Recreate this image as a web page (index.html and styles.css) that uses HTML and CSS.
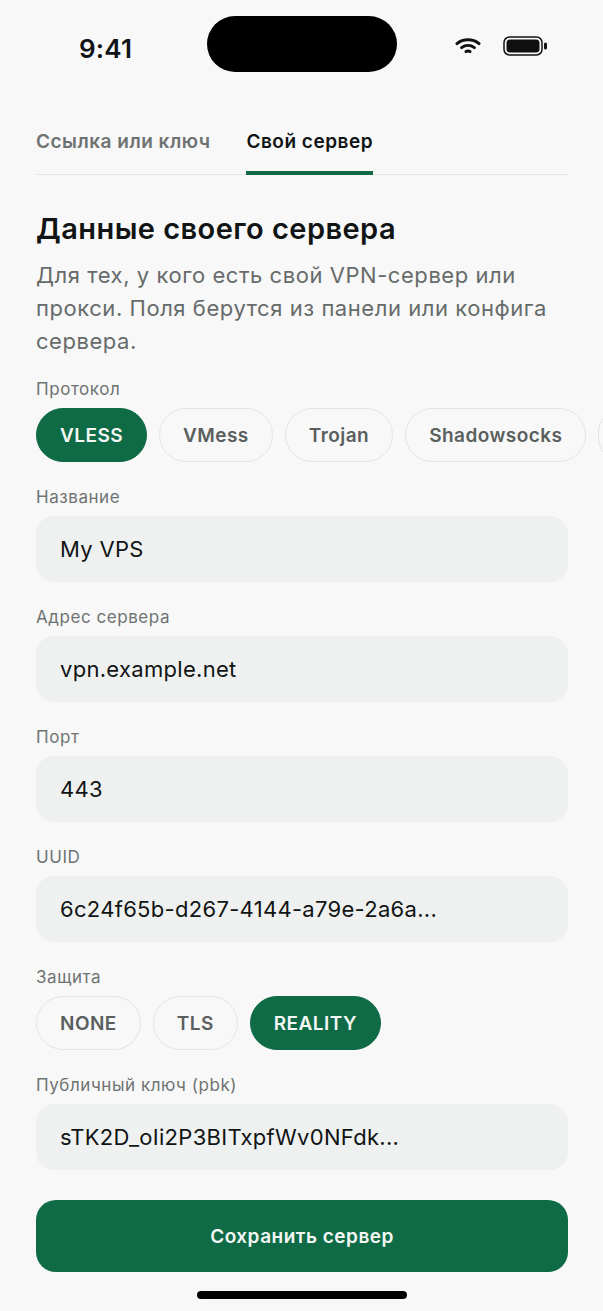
FILE: index.html
```html
<!DOCTYPE html>
<html lang="ru">

<head>
  <meta charset="UTF-8">
  <meta name="viewport" content="width=device-width, initial-scale=1.0">
  <title>Свой сервер</title>
  <link rel="stylesheet" href="styles.css">
</head>

<body>
  <!-- Status bar -->
  <div class="status-bar">
    <span class="time">9:41</span>
    <div class="island"></div>
    <div class="status-icons">
      <svg class="wifi" width="26" height="18" viewBox="0 0 26 18" fill="none" stroke="#111" stroke-width="3" stroke-linecap="round">
        <path d="M2 6.6C8.2 1.6 17.8 1.6 24 6.6"/>
        <path d="M6.6 10.6C10.4 7.8 15.6 7.8 19.4 10.6"/>
        <path d="M11 14.6C12.2 13.8 13.8 13.8 15 14.6"/>
      </svg>
      <svg class="battery" width="46" height="20" viewBox="0 0 46 20">
        <rect x="1" y="1" width="38" height="18" rx="5.5" fill="none" stroke="#111" stroke-width="1.5"/>
        <rect x="3.5" y="3.5" width="33" height="13" rx="3.5" fill="#111"/>
        <rect x="41" y="6.5" width="3" height="7" rx="1.5" fill="#111"/>
      </svg>
    </div>
  </div>

  <main class="content">
    <!-- Tabs -->
    <div class="tabs">
      <a class="tab">Ссылка или ключ</a>
      <a class="tab active">Свой сервер</a>
    </div>

    <h1>Данные своего сервера</h1>
    <p class="intro">Для тех, у кого есть свой VPN-сервер или прокси. Поля берутся из панели или конфига сервера.</p>

    <div class="label chips-label first">Протокол</div>
    <div class="chips">
      <span class="chip active">VLESS</span>
      <span class="chip">VMess</span>
      <span class="chip">Trojan</span>
      <span class="chip">Shadowsocks</span>
      <span class="chip chip-cut"></span>
    </div>

    <div class="field">
      <div class="label">Название</div>
      <div class="input">My VPS</div>
    </div>
    <div class="field">
      <div class="label">Адрес сервера</div>
      <div class="input">vpn.example.net</div>
    </div>
    <div class="field">
      <div class="label">Порт</div>
      <div class="input">443</div>
    </div>
    <div class="field">
      <div class="label">UUID</div>
      <div class="input">6c24f65b-d267-4144-a79e-2a6a...</div>
    </div>

    <div class="label chips-label">Защита</div>
    <div class="chips">
      <span class="chip">NONE</span>
      <span class="chip">TLS</span>
      <span class="chip active">REALITY</span>
    </div>

    <div class="field">
      <div class="label">Публичный ключ (pbk)</div>
      <div class="input">sTK2D_oIi2P3BITxpfWv0NFdk...</div>
    </div>

    <button class="save">Сохранить сервер</button>
  </main>

  <div class="home-bar"></div>
</body>

</html>
```

FILE: styles.css
```css
* {
  box-sizing: border-box;
}

html,
body {
  margin: 0;
  height: 100%;
}

body {
  width: 603px;
  height: 1311px;
  overflow: hidden;
  position: relative;
  background: #f8f8f8;
  color: #111414;
  font-family: Inter, "Noto Sans", sans-serif;
}

/* Status bar */
.status-bar {
  height: 106px;
  position: relative;
  display: flex;
  justify-content: space-between;
  align-items: flex-start;
  padding: 32px 54px 0 79px;
}

.time {
  font-size: 26px;
  font-weight: 600;
  line-height: 34px;
  letter-spacing: 0.2px;
}

.island {
  position: absolute;
  top: 16px;
  left: 207px;
  width: 190px;
  height: 56px;
  background: #000;
  border-radius: 28px;
}

.status-icons {
  display: flex;
  align-items: center;
  gap: 22px;
  padding-top: 4px;
}

.content {
  padding: 0 35px 0 36px;
}

/* Tabs */
.tabs {
  display: flex;
  gap: 36px;
  height: 69px;
  border-bottom: 1px solid #e3e5e5;
}

.tab {
  height: 69px;
  padding-top: 23px;
  font-size: 19px;
  font-weight: 600;
  line-height: 26px;
  letter-spacing: 0.5px;
  color: #6e7372;
}

.tab.active {
  color: #111414;
  border-bottom: 4px solid #0f6b46;
}

h1 {
  margin: 36px 0 0;
  font-size: 29px;
  font-weight: 600;
  line-height: 36px;
  letter-spacing: 0.45px;
}

.intro {
  margin: 12px 0 0;
  font-size: 22px;
  line-height: 33px;
  letter-spacing: 0.55px;
  color: #666b6a;
}

.label {
  font-size: 17px;
  line-height: 20px;
  letter-spacing: 0.55px;
  color: #6e7372;
}

.chips-label {
  margin-top: 25px;
}

.chips-label.first {
  margin-top: 21px;
}

.chips {
  display: flex;
  gap: 12px;
  margin-top: 9px;
  margin-right: -35px;
  overflow: hidden;
}

.chip {
  flex: none;
  height: 54px;
  padding: 0 23px;
  display: flex;
  align-items: center;
  border: 1px solid #e3e5e5;
  border-radius: 27px;
  font-size: 19px;
  font-weight: 600;
  letter-spacing: 0.45px;
  color: #5a5f5e;
}

.chip-cut {
  width: 40px;
}

.chip.active {
  background: #0f6b46;
  border-color: #0f6b46;
  color: #f4f7f5;
}

.field {
  margin-top: 25px;
}

.field .input {
  margin-top: 9px;
}

.input {
  height: 66px;
  padding: 0 23px;
  display: flex;
  align-items: center;
  background: #eff1f0;
  border: 1px solid #eef0f0;
  border-radius: 18px;
  font-size: 22px;
  letter-spacing: 0.3px;
  color: #111414;
}

.save {
  display: block;
  width: 100%;
  height: 72px;
  margin-top: 30px;
  border: none;
  border-radius: 20px;
  background: #0f6b46;
  color: #f4f7f5;
  font-family: inherit;
  font-size: 19px;
  font-weight: 600;
  letter-spacing: 0.5px;
}

.home-bar {
  position: absolute;
  left: 197px;
  bottom: 12px;
  width: 210px;
  height: 8px;
  border-radius: 4px;
  background: #000;
}
```
